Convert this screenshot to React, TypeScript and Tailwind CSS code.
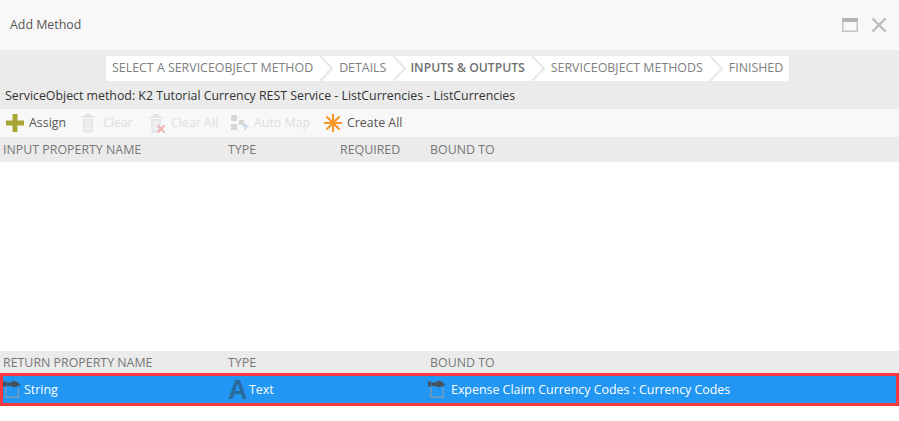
const font = "font-['Open_Sans',sans-serif]";

function Chevron() {
  return (
    <svg width="16" height="25" viewBox="0 0 16 25" className="shrink-0">
      <path d="M0 0 L12 12.5 L0 25" fill="none" stroke="#e8e8e8" strokeWidth="2" />
    </svg>
  );
}

function PlugIcon() {
  return (
    <svg width="18" height="19" viewBox="0 0 18 19" className="shrink-0">
      <path d="M2.7 6.5 V17.3 H15.3 V8" fill="none" stroke="#7d9ab3" strokeWidth="1.4" />
      <rect x="0" y="1.5" width="3.5" height="5" fill="#47525c" />
      <path d="M4 2.5 H8 L10 0.5 L14.5 2 L17.5 5 L14 6.5 L10 7.5 L8 6 H4 Z" fill="#47525c" />
    </svg>
  );
}

function Tool({ icon, label, disabled, width }: { icon: React.ReactNode; label: string; disabled?: boolean; width: string }) {
  return (
    <div className={`flex items-center gap-[5px] ${width}`}>
      {icon}
      <span className={disabled ? "text-[#dedede]" : "text-[#555]"}>{label}</span>
    </div>
  );
}

function Trash({ cross }: { cross?: boolean }) {
  return (
    <svg width="18" height="19" viewBox="0 0 18 19" className="shrink-0">
      <path d="M1.5 3 H14.5 M6 3 V1 H10 V3" fill="none" stroke="#e0e0e0" strokeWidth="1.5" />
      <path d="M2.8 5 H13.2 L12.4 18.5 H3.6 Z" fill="#e6e6e6" />
      <path d="M6 7 V16.5 M8 7 V16.5 M10 7 V16.5" stroke="#f8f8f8" strokeWidth="1" />
      {cross && <path d="M9.5 11.5 L16.5 18.5 M16.5 11.5 L9.5 18.5" stroke="#efb5b5" strokeWidth="2" />}
    </svg>
  );
}

export default function App() {
  return (
    <div className={`${font} w-[899px] h-[421px] bg-white text-[12.4px] overflow-hidden`}>
      <div className="h-[50px] bg-[#f8f8f8] flex items-center justify-between pl-[10px] pr-[12px]">
        <span className="text-[#555]">Add Method</span>
        <div className="flex items-center gap-[13px]">
          <svg width="16" height="14" viewBox="0 0 16 14">
            <rect x="0.75" y="0.75" width="14.5" height="12.5" fill="none" stroke="#c4c4c4" strokeWidth="1.5" />
            <rect x="0" y="0" width="16" height="4" fill="#b5b5b5" />
          </svg>
          <svg width="16" height="16" viewBox="0 0 16 16">
            <path d="M1.5 1.5 L14.5 14.5 M14.5 1.5 L1.5 14.5" stroke="#bdbdbd" strokeWidth="2.4" />
          </svg>
        </div>
      </div>

      <div className="bg-[#ebebeb] h-[59px] flex flex-col">
        <div className="pt-[6px] flex pl-[106px]">
          <div className="flex h-[25px] items-center bg-white rounded-[2px] text-[#808080] px-[6px]">
            <span>SELECT A SERVICEOBJECT METHOD</span>
            <span className="ml-[7px]"><Chevron /></span>
            <span className="ml-[3px]">DETAILS</span>
            <span className="ml-[7px]"><Chevron /></span>
            <span className="ml-[1px] font-semibold text-[12.2px] text-[#6f6f6f]">INPUTS &amp; OUTPUTS</span>
            <span className="ml-[7px]"><Chevron /></span>
            <span className="ml-[3px]">SERVICEOBJECT METHODS</span>
            <span className="ml-[7px]"><Chevron /></span>
            <span className="ml-[3px]">FINISHED</span>
          </div>
        </div>
        <div className="pl-[5px] mt-[6px] text-[#333] text-[12.35px] leading-[17px]">
          ServiceObject method: K2 Tutorial Currency REST Service - ListCurrencies - ListCurrencies
        </div>
      </div>

      <div className="h-[28px] bg-[#f8f8f8] flex items-center pl-[6px]">
        <Tool
          width="w-[74px]"
          label="Assign"
          icon={
            <svg width="18" height="18" viewBox="0 0 18 18" className="shrink-0">
              <path d="M6.5 0 H11.5 V6.5 H18 V11.5 H11.5 V18 H6.5 V11.5 H0 V6.5 H6.5 Z" fill="#a9a734" />
            </svg>
          }
        />
        <Tool width="w-[68px]" label="Clear" disabled icon={<Trash />} />
        <Tool width="w-[83px]" label="Clear All" disabled icon={<Trash cross />} />
        <Tool
          width="w-[93px]"
          label="Auto Map"
          disabled
          icon={
            <svg width="18" height="18" viewBox="0 0 18 18" className="shrink-0">
              <rect x="0" y="1" width="6" height="6" fill="#d6d6d6" />
              <rect x="0" y="10" width="6" height="6" fill="#d6d6d6" />
              <rect x="8" y="6" width="5" height="5" fill="#d6d6d6" />
              <path d="M15 8 L11 13 H14 L12 18 L18 11.5 H15 Z" fill="#c8d8e6" />
            </svg>
          }
        />
        <Tool
          width=""
          label="Create All"
          icon={
            <svg width="18" height="18" viewBox="0 0 18 18" className="shrink-0">
              <path d="M9 0 V18 M0 9 H18 M2.5 2.5 L15.5 15.5 M15.5 2.5 L2.5 15.5" stroke="#f8962a" strokeWidth="2.2" />
            </svg>
          }
        />
      </div>

      <div className="h-[25px] bg-[#ebebeb] flex items-center pl-[3px] pt-[1px] text-[#777]">
        <span className="w-[225px]">INPUT PROPERTY NAME</span>
        <span className="w-[112px]">TYPE</span>
        <span className="w-[90px]">REQUIRED</span>
        <span>BOUND TO</span>
      </div>

      <div className="h-[189px] bg-white" />

      <div className="h-[22px] bg-[#ebebeb] flex items-center pl-[3px] pt-[2px] text-[#777]">
        <span className="w-[225px]">RETURN PROPERTY NAME</span>
        <span className="w-[202px]">TYPE</span>
        <span>BOUND TO</span>
      </div>

      <div className="h-[33px] bg-[#2196f3] border-[3px] border-[#f9373f] flex items-center text-white">
        <div className="w-[225px] flex items-center gap-[3px]">
          <PlugIcon />
          <span className="pt-[2px]">String</span>
        </div>
        <div className="w-[200px] flex items-center gap-[3px]">
          <span className="w-[18px] text-center text-[#2a6a9c] text-[27px] leading-[24px] font-bold font-['Liberation_Sans',sans-serif]">A</span>
          <span className="pt-[2px]">Text</span>
        </div>
        <div className="flex items-center gap-[5px]">
          <PlugIcon />
          <span className="pt-[2px]">Expense Claim Currency Codes : Currency Codes</span>
        </div>
      </div>
    </div>
  );
}
